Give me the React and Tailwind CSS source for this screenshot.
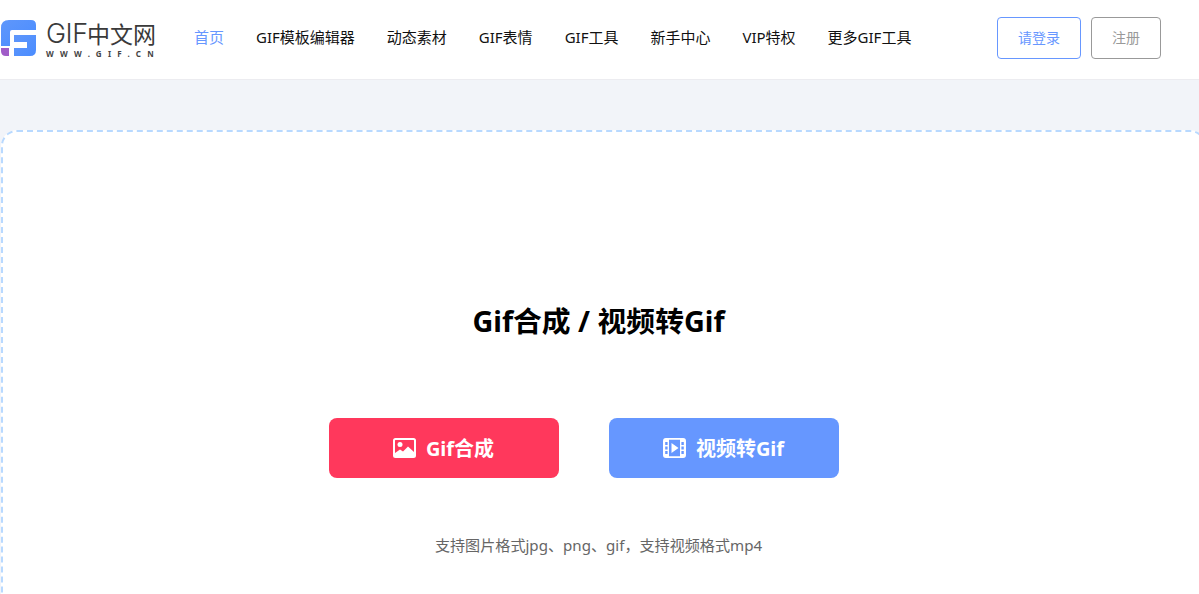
import React from 'react';

const navItems = ['GIF模板编辑器', '动态素材', 'GIF表情', 'GIF工具', '新手中心', 'VIP特权', '更多GIF工具'];

const Logo = () => (
  <div className="flex items-start w-[155px] h-9 -mt-[3px] shrink-0">
    <svg width="37" height="36" viewBox="0 0 37 36" className="shrink-0">
      <defs>
        <linearGradient id="logoBlue" x1="0" y1="0" x2="1" y2="1">
          <stop offset="0" stopColor="#5f97fb" />
          <stop offset="1" stopColor="#4a8cff" />
        </linearGradient>
      </defs>
      <path d="M9 0H31Q36 0 36 5V10H12Q10 10 10 12V26H1V8Q1 0 9 0Z" fill="url(#logoBlue)" />
      <path d="M14 15H36V30Q36 36 30 36H14V28H27V22H14Z" fill="url(#logoBlue)" />
      <path d="M1 28H9V36H6Q1 36 1 31Z" fill="#a05cc8" />
    </svg>
    <div className="ml-[9px] mt-[2px] flex flex-col">
      <div className="flex items-center h-6 text-[#3a3a3a] whitespace-nowrap">
        <span className="w-[41px] text-[27px] leading-6 font-light font-['Inter',sans-serif] tracking-[-0.5px]">GIF</span>
        <span className="text-[23px] leading-6">中文网</span>
      </div>
      <span className="mt-[3px] text-[8px] leading-[10px] font-bold tracking-[6.3px] text-[#444] whitespace-nowrap">WWW.GIF.CN</span>
    </div>
  </div>
);

const ImageIcon = () => (
  <svg width="23" height="20" viewBox="0 0 23 20" fill="none">
    <rect x="1" y="1" width="21" height="18" rx="1.5" stroke="white" strokeWidth="2" />
    <circle cx="7" cy="6.5" r="2.5" fill="white" />
    <path d="M2 18V15L7 11.5L10 13.5L15 8.5L21 14V18Z" fill="white" />
  </svg>
);

const VideoIcon = () => (
  <svg width="23" height="20" viewBox="0 0 23 20" fill="none">
    <rect x="0.9" y="0.9" width="21.2" height="18.2" rx="2" stroke="white" strokeWidth="1.8" />
    <path
      fillRule="evenodd"
      d="M1 1H6V19H1ZM2.2 4V7H4.6V4ZM2.2 8.5V11.5H4.6V8.5ZM2.2 13V16H4.6V13ZM17 1H22V19H17ZM18.4 4V7H20.8V4ZM18.4 8.5V11.5H20.8V8.5ZM18.4 13V16H20.8V13Z"
      fill="white"
    />
    <path d="M8.5 5L15.5 10L8.5 15Z" fill="white" />
  </svg>
);

export default function App() {
  return (
    <div className="h-screen overflow-hidden bg-[#f2f4f9] font-['Noto_Sans','Noto_Sans_CJK_SC',sans-serif]">
      {/* 顶部导航 */}
      <header className="h-20 bg-white border-b border-[#ececf0] flex items-center">
        <Logo />
        <nav className="ml-[39px] flex items-center gap-8 text-[15px] text-[#111] -mt-[4px]">
          <a className="text-[#6797ff]">首页</a>
          {navItems.map((item) => (
            <a key={item} className="whitespace-nowrap">{item}</a>
          ))}
        </nav>
        <div className="ml-auto mr-[38px] flex items-center gap-[10px] text-sm -mt-[4px]">
          <button className="w-[84px] h-[42px] rounded border border-[#6797ff] text-[#6797ff]">请登录</button>
          <button className="w-[70px] h-[42px] rounded border border-[#999] text-[#999]">注册</button>
        </div>
      </header>

      {/* 上传区域 */}
      <main className="mt-[50px] ml-px w-[1205px] pr-[10px] h-[560px] bg-white border-2 border-dashed border-[#b8d9ff] rounded-2xl flex flex-col items-center">
        <h1 className="mt-[165px] text-[28.8px] leading-[48px] font-bold text-black">Gif合成 / 视频转Gif</h1>
        <div className="mt-[73px] mr-[30px] flex gap-[50px] text-xl font-bold text-white">
          <button className="w-[230px] h-[60px] rounded-lg bg-[#ff385c] flex items-center justify-center gap-[10px]">
            <ImageIcon />
            <span className="mt-[2px]">Gif合成</span>
          </button>
          <button className="w-[230px] h-[60px] rounded-lg bg-[#6697ff] flex items-center justify-center gap-[10px]">
            <VideoIcon />
            <span className="mt-[2px]">视频转Gif</span>
          </button>
        </div>
        <p className="mt-[57px] text-[15.1px] leading-5 text-[#666]">支持图片格式jpg、png、gif，支持视频格式mp4</p>
      </main>
    </div>
  );
}
